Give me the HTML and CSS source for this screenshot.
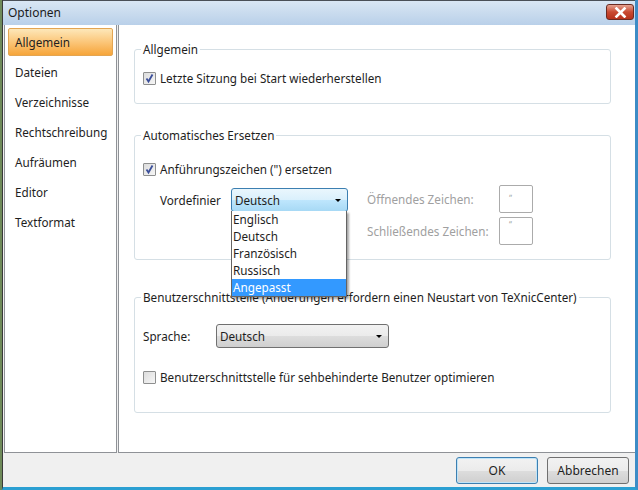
FILE: index.html
```html
<!DOCTYPE html>
<html lang="de">
<head>
  <meta charset="UTF-8" />
  <title>Optionen</title>
  <link rel="stylesheet" href="styles.css">
</head>
<body>
<div class="window">
  <div class="titlebar">
    <span class="title">Optionen</span>
    <span class="close-btn">
      <svg width="13" height="11" viewBox="0 0 13 11"><path d="M2.5 1.5 L10.5 9.5 M10.5 1.5 L2.5 9.5" stroke="#fff" stroke-width="2.6" stroke-linecap="square"/></svg>
    </span>
  </div>

  <div class="content">
    <ul class="nav">
      <li class="nav-item active">Allgemein</li>
      <li class="nav-item">Dateien</li>
      <li class="nav-item">Verzeichnisse</li>
      <li class="nav-item">Rechtschreibung</li>
      <li class="nav-item">Aufräumen</li>
      <li class="nav-item">Editor</li>
      <li class="nav-item">Textformat</li>
    </ul>

    <div class="page">
      <div class="group group-general">
        <span class="group-title">Allgemein</span>
        <label class="check-row row-last-session">
          <span class="checkbox"><svg width="11" height="11" viewBox="0 0 11 11"><path d="M2.5 5.5 L4.5 8.5 L8.5 1.5" fill="none" stroke="#3b4f9a" stroke-width="1.8"/></svg></span>
          Letzte Sitzung bei Start wiederherstellen
        </label>
      </div>

      <div class="group group-replace">
        <span class="group-title">Automatisches Ersetzen</span>
        <label class="check-row row-quotes">
          <span class="checkbox"><svg width="11" height="11" viewBox="0 0 11 11"><path d="M2.5 5.5 L4.5 8.5 L8.5 1.5" fill="none" stroke="#3b4f9a" stroke-width="1.8"/></svg></span>
          Anführungszeichen (") ersetzen
        </label>
        <div class="preset-row">
          <span class="preset-label">Vordefinier</span>
          <div class="combo-wrap">
            <div class="combo combo-open">
              <span>Deutsch</span>
              <span class="arrow"></span>
            </div>
            <ul class="dropdown">
              <li>Englisch</li>
              <li>Deutsch</li>
              <li>Französisch</li>
              <li>Russisch</li>
              <li class="selected">Angepasst</li>
            </ul>
          </div>
          <div class="char-grid">
            <span class="muted">Öffnendes Zeichen:</span>
            <span class="char-box">„</span>
            <span class="muted">Schließendes Zeichen:</span>
            <span class="char-box">“</span>
          </div>
        </div>
      </div>

      <div class="group group-ui">
        <span class="group-title">Benutzerschnittstelle (Änderungen erfordern einen Neustart von TeXnicCenter)</span>
        <div class="lang-row">
          <span class="lang-label">Sprache:</span>
          <div class="combo combo-lang">
            <span>Deutsch</span>
            <span class="arrow"></span>
          </div>
        </div>
        <label class="check-row row-accessible">
          <span class="checkbox"></span>
          Benutzerschnittstelle für sehbehinderte Benutzer optimieren
        </label>
      </div>
    </div>
  </div>

  <div class="footer">
    <button class="btn btn-default">OK</button>
    <button class="btn">Abbrechen</button>
  </div>
</div>
</body>
</html>
```

FILE: styles.css
```css
body {
  margin: 0;
  background-color: #6f8a5a;
  font-family: "Noto Sans", sans-serif;
  font-size: 11.7px;
  color: #1e1e1e;
}

.window {
  width: 632px;
  height: 487px;
  margin-left: 2px;
  background-color: #f0f0f0;
  border-left: 1px solid #3a3a3a;
  border-right: 3px solid #3d8cc6;
  border-bottom: 3px solid #2b9fd2;
  display: flex;
  flex-direction: column;
}

.titlebar {
  height: 25px;
  box-sizing: border-box;
  border-top: 1px solid #4a4f57;
  background: linear-gradient(#d9e6f4, #b9d0e9);
  display: flex;
  align-items: flex-start;
  justify-content: space-between;
  padding: 3px 1px 0 5px;
  flex-shrink: 0;
}

.title {
  color: #1b1b1b;
  font-size: 12px;
  line-height: 18px;
}

.close-btn {
  width: 28px;
  height: 16px;
  box-sizing: border-box;
  border: 1px solid #6b2a22;
  border-radius: 3px;
  background: linear-gradient(#e6a392, #c94a32 50%, #b7321c);
  display: flex;
  align-items: center;
  justify-content: center;
}

.content {
  flex: 1;
  display: flex;
  padding-left: 1px;
  background-color: #f0f0f0;
}

.nav {
  list-style: none;
  margin: 0 1px 0 0;
  padding: 3px 3px;
  width: 105px;
  background-color: #fff;
  border: 1px solid #8f9297;
  border-top: none;
}

.nav-item {
  box-sizing: border-box;
  height: 28px;
  line-height: 26px;
  margin-bottom: 2px;
  padding-left: 6px;
  border: 1px solid transparent;
}

.nav-item.active {
  background: linear-gradient(#fde7b9, #fbc373 55%, #f6a53a);
  border-color: #e3a552;
  border-radius: 2px;
}

.page {
  flex: 1;
  background-color: #fff;
  border-left: 1px solid #8f9297;
  border-bottom: 1px solid #8f9297;
  padding: 24px 24px 0 15px;
}

.group {
  box-sizing: border-box;
  border: 1px solid #d5dfe5;
  border-radius: 3px;
  padding-left: 8px;
}

.group-title {
  display: block;
  width: fit-content;
  height: 16px;
  line-height: 16px;
  margin-top: -9px;
  margin-left: -2px;
  padding: 0 2px;
  background-color: #fff;
}

.group-general {
  height: 55px;
}

.group-replace {
  margin-top: 31px;
  height: 125px;
}

.group-ui {
  margin-top: 37px;
  height: 116px;
}

.check-row {
  display: flex;
  align-items: center;
  gap: 4px;
  height: 16px;
}

.row-last-session {
  margin-top: 13px;
}

.row-quotes {
  margin-top: 18px;
}

.row-accessible {
  margin-top: 21px;
}

.checkbox {
  width: 11px;
  height: 11px;
  border: 1px solid #8e8f8f;
  border-radius: 1px;
  background: linear-gradient(135deg, #dcdcdc, #f6f6f6);
  display: flex;
  align-items: center;
  justify-content: center;
}

.preset-row {
  display: flex;
  align-items: flex-start;
  margin-top: 8px;
  padding-left: 17px;
}

.preset-label {
  width: 71px;
  line-height: 24px;
  margin-top: 3px;
}

.combo-wrap {
  position: relative;
  margin-top: 3px;
}

.combo {
  box-sizing: border-box;
  height: 24px;
  border: 1px solid #707070;
  border-radius: 3px;
  background: linear-gradient(#f2f2f2, #ebebeb 50%, #dddddd 51%, #cfcfcf);
  display: flex;
  align-items: center;
  justify-content: space-between;
  padding: 0 6px 0 3px;
}

.combo-open {
  width: 117px;
  border-color: #3c7fb1;
  background: linear-gradient(#eaf6fd, #d9f0fc 50%, #bee6fd 51%, #a7d9f5);
}

.combo-lang {
  width: 173px;
}

.arrow {
  width: 0;
  height: 0;
  border-left: 3px solid transparent;
  border-right: 3px solid transparent;
  border-top: 3px solid #000;
}

.dropdown {
  position: absolute;
  top: 23px;
  left: 0;
  width: 114px;
  margin: 0;
  padding: 0;
  list-style: none;
  background-color: #fff;
  border: 1px solid #646464;
  border-top: none;
  box-shadow: 2px 2px 2px rgba(0, 0, 0, 0.35);
  z-index: 2;
}

.dropdown li {
  height: 17px;
  line-height: 17px;
  padding-left: 1px;
}

.dropdown li.selected {
  background-color: #3399ff;
  color: #fff;
}

.char-grid {
  display: grid;
  grid-template-columns: 132px 34px;
  row-gap: 4px;
  align-items: center;
  margin-left: 19px;
}

.muted {
  color: #a0a0a0;
}

.char-box {
  height: 28px;
  border: 1px solid #ababab;
  border-radius: 2px;
  font-size: 8px;
  line-height: 10px;
  color: #a0a0a0;
  padding: 2px 0 0 9px;
  box-sizing: border-box;
}

.lang-row {
  display: flex;
  align-items: center;
  margin-top: 19px;
}

.lang-label {
  width: 73px;
}

.footer {
  height: 34px;
  flex-shrink: 0;
  display: flex;
  justify-content: flex-end;
  align-items: center;
  gap: 9px;
  padding-right: 6px;
}

.btn {
  width: 82px;
  height: 27px;
  font-family: inherit;
  font-size: 12px;
  color: #1e1e1e;
  border: 1px solid #707070;
  border-radius: 3px;
  background: linear-gradient(#f2f2f2, #ebebeb 50%, #dddddd 51%, #cfcfcf);
}

.btn-default {
  border-color: #3c7fb1;
  box-shadow: inset 0 0 0 1px #c0e4f8;
}
```
